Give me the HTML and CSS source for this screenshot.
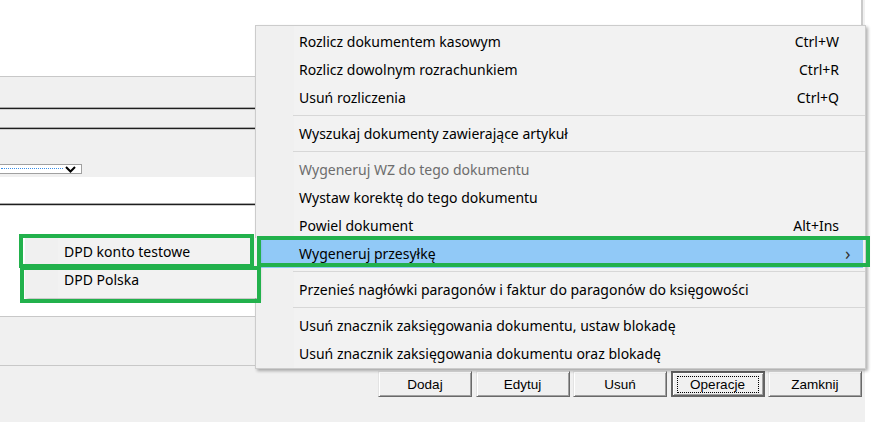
FILE: index.html
```html
<!doctype html>
<html lang="pl">
  <head>
    <meta charset="UTF-8" />
    <title>Operacje</title>
    <link rel="stylesheet" href="styles.css">
  </head>
  <body>
    <div class="window">
      <div class="top-pane"></div>
      <div class="toolbar"></div>
      <div class="rule"></div>
      <div class="strip"></div>
      <div class="rule"></div>
      <div class="filter">
        <div class="combo">
          <span class="combo-focus"></span>
          <svg class="combo-arrow" width="11" height="7" viewBox="0 0 11 7">
            <polyline points="1,1 5.5,5.5 10,1" fill="none" stroke="#000" stroke-width="2" />
          </svg>
        </div>
      </div>
      <div class="header-row"></div>
      <div class="rule"></div>
      <div class="list"></div>
      <div class="summary"></div>
      <div class="footer">
        <button class="btn">Dodaj</button>
        <button class="btn">Edytuj</button>
        <button class="btn">Usuń</button>
        <button class="btn btn-default"><span class="focus">Operacje</span></button>
        <button class="btn">Zamknij</button>
      </div>
    </div>

    <div class="menu">
      <div class="item"><span>Rozlicz dokumentem kasowym</span><span class="key">Ctrl+W</span></div>
      <div class="item"><span>Rozlicz dowolnym rozrachunkiem</span><span class="key">Ctrl+R</span></div>
      <div class="item"><span>Usuń rozliczenia</span><span class="key">Ctrl+Q</span></div>
      <div class="sep"></div>
      <div class="item"><span>Wyszukaj dokumenty zawierające artykuł</span></div>
      <div class="sep"></div>
      <div class="item disabled"><span>Wygeneruj WZ do tego dokumentu</span></div>
      <div class="item"><span>Wystaw korektę do tego dokumentu</span></div>
      <div class="item"><span>Powiel dokument</span><span class="key">Alt+Ins</span></div>
      <div class="item active"><span>Wygeneruj przesyłkę</span><span class="arrow">›</span></div>
      <div class="sep"></div>
      <div class="item"><span>Przenieś nagłówki paragonów i faktur do paragonów do księgowości</span></div>
      <div class="sep"></div>
      <div class="item"><span>Usuń znacznik zaksięgowania dokumentu, ustaw blokadę</span></div>
      <div class="item"><span>Usuń znacznik zaksięgowania dokumentu oraz blokadę</span></div>
    </div>

    <div class="submenu">
      <div class="item"><span>DPD konto testowe</span></div>
      <div class="item"><span>DPD Polska</span></div>
    </div>

    <div class="mark mark-konto"></div>
    <div class="mark mark-polska"></div>
    <div class="mark mark-send"></div>
  </body>
</html>
```

FILE: styles.css
```css
body {
  margin: 0;
  background: #fff;
  font-family: "Noto Sans", "Open Sans", sans-serif;
  font-size: 14px;
  color: #000;
}
.window {
  width: 865px;
  height: 422px;
  display: flex;
  flex-direction: column;
  background: #f0f0f0;
}
.top-pane {
  height: 76px;
  width: 861px;
  background: #fff;
  border-bottom: 1px solid #c8c8c8;
  border-right: 2px solid #cacaca;
}
.toolbar {
  height: 30px;
}
.rule {
  height: 1px;
  background: #1e1e1e;
  border-top: 1px solid #a8a8a8;
  border-bottom: 1px solid #cdcdcd;
}
.strip {
  height: 17px;
}
.filter {
  height: 47px;
  padding-top: 34px;
  box-sizing: border-box;
}
.combo {
  position: relative;
  width: 84px;
  height: 10px;
  margin-left: -2px;
  box-sizing: border-box;
  background: #fff;
  border: 1px solid #a0a0a0;
}
.combo-focus {
  display: block;
  width: 62px;
  margin: 3px 0 0 2px;
  border-top: 1px dotted #3a8ee6;
}
.combo-arrow {
  position: absolute;
  right: 5px;
  top: 1px;
}
.header-row {
  height: 26px;
  background: #fff;
}
.list {
  height: 110px;
  background: #fff;
  border-bottom: 1px solid #c8c8c8;
}
.summary {
  height: 48px;
  border-bottom: 1px solid #c8c8c8;
}
.footer {
  flex: 1;
  display: flex;
  justify-content: flex-end;
  align-items: flex-start;
  gap: 3.5px;
  padding: 5px 3px 0 0;
}
.btn {
  width: 94px;
  height: 26px;
  padding: 0;
  font-family: "Liberation Sans", Arial, sans-serif;
  font-size: 13.5px;
  color: #000;
  background: #f0f0f0;
  border: 1px solid;
  border-color: #e3e3e3 #696969 #696969 #e3e3e3;
  box-shadow: inset 1px 1px 0 #fff, inset -1px -1px 0 #a0a0a0;
}
.btn-default {
  border: 2px solid #646464;
  box-shadow: inset 1px 1px 0 #fff, inset -1px -1px 0 #a0a0a0;
}
.btn-default .focus {
  display: block;
  margin: 0 4px;
  line-height: 15px;
  border: 1px dotted #000;
}

/* popup menus */
.menu {
  position: absolute;
  left: 255px;
  top: 25px;
  width: 611px;
  box-sizing: border-box;
  padding-top: 2px;
  background: linear-gradient(to right, #f0f0f0 38px, #f2f2f2 38px);
  border: 1px solid #cccccc;
  box-shadow: 2px 2px 3px rgba(0, 0, 0, 0.3);
}
.item {
  height: 28px;
  box-sizing: border-box;
  display: flex;
  align-items: center;
  padding: 0 26px 2px 43px;
  white-space: nowrap;
}
.item span:first-child {
  flex: 1;
}
.item.disabled {
  color: #6d6d6d;
}
.item.active {
  margin: 0 2px;
  padding: 0 24px 2px 41px;
  background: #91c9f7;
}
.arrow {
  margin-right: -22px;
  width: 16px;
  padding-left: 6px;
  color: #333;
  font-size: 18px;
  line-height: 1;
}
.sep {
  height: 8px;
  margin-left: 37px;
  background: linear-gradient(#d7d7d7, #d7d7d7) no-repeat 0 3px / 100% 1px;
}
.submenu {
  position: absolute;
  left: 25px;
  top: 238px;
  width: 233px;
  height: 60px;
  box-sizing: border-box;
  background: linear-gradient(to right, #f0f0f0 33px, #f2f2f2 33px);
  box-shadow: 2px 2px 3px rgba(0, 0, 0, 0.25);
}
.submenu .item {
  padding-left: 39px;
}
.mark {
  position: absolute;
  box-sizing: border-box;
  border: 4px solid #22b14c;
}
.mark-konto {
  left: 19px;
  top: 234px;
  width: 235px;
  height: 34px;
}
.mark-polska {
  left: 20px;
  top: 266px;
  width: 241px;
  height: 37px;
}
.mark-send {
  left: 257px;
  top: 236px;
  width: 613px;
  height: 31px;
}
```
